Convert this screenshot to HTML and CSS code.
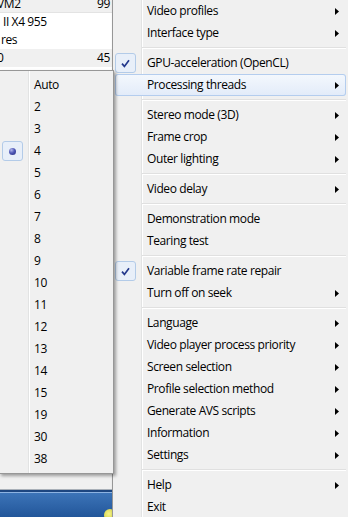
FILE: index.html
```html
<!DOCTYPE html>
<html>
<head>
<meta charset="utf-8">
<link rel="stylesheet" href="styles.css">
</head>
<body>
<div class="screen">
  <div class="listview">
    <div class="lv-row lv-head"><span class="cut3">VM2</span><span>99</span></div>
    <div class="lv-row"><span class="ind">II X4 955</span></div>
    <div class="lv-row"><span class="ind1">res</span></div>
    <div class="lv-row lv-sel"><span class="cut3">0</span><span>45</span></div>
  </div>
  <div class="window-body"></div>
  <div class="taskbar"><span class="tray-icon"></span></div>

  <div class="menu main-menu">
    <div class="mi"><span class="ic"></span><span class="lbl">Video profiles</span><svg class="arr" viewBox="0 0 4 7"><path d="M0 0L4 3.5L0 7z"/></svg></div>
    <div class="mi"><span class="ic"></span><span class="lbl">Interface type</span><svg class="arr" viewBox="0 0 4 7"><path d="M0 0L4 3.5L0 7z"/></svg></div>
    <div class="sep"></div>
    <div class="mi"><span class="ic box"><svg class="check" viewBox="0 0 9 9"><path d="M1 4.6L3.4 7.4L8 1.2"/></svg></span><span class="lbl">GPU-acceleration (OpenCL)</span></div>
    <div class="mi hot"><span class="ic"></span><span class="lbl">Processing threads</span><svg class="arr" viewBox="0 0 4 7"><path d="M0 0L4 3.5L0 7z"/></svg></div>
    <div class="sep"></div>
    <div class="mi"><span class="ic"></span><span class="lbl">Stereo mode (3D)</span><svg class="arr" viewBox="0 0 4 7"><path d="M0 0L4 3.5L0 7z"/></svg></div>
    <div class="mi"><span class="ic"></span><span class="lbl">Frame crop</span><svg class="arr" viewBox="0 0 4 7"><path d="M0 0L4 3.5L0 7z"/></svg></div>
    <div class="mi"><span class="ic"></span><span class="lbl">Outer lighting</span><svg class="arr" viewBox="0 0 4 7"><path d="M0 0L4 3.5L0 7z"/></svg></div>
    <div class="sep"></div>
    <div class="mi"><span class="ic"></span><span class="lbl">Video delay</span><svg class="arr" viewBox="0 0 4 7"><path d="M0 0L4 3.5L0 7z"/></svg></div>
    <div class="sep"></div>
    <div class="mi"><span class="ic"></span><span class="lbl">Demonstration mode</span></div>
    <div class="mi"><span class="ic"></span><span class="lbl">Tearing test</span></div>
    <div class="sep"></div>
    <div class="mi"><span class="ic box"><svg class="check" viewBox="0 0 9 9"><path d="M1 4.6L3.4 7.4L8 1.2"/></svg></span><span class="lbl">Variable frame rate repair</span></div>
    <div class="mi"><span class="ic"></span><span class="lbl">Turn off on seek</span><svg class="arr" viewBox="0 0 4 7"><path d="M0 0L4 3.5L0 7z"/></svg></div>
    <div class="sep"></div>
    <div class="mi"><span class="ic"></span><span class="lbl">Language</span><svg class="arr" viewBox="0 0 4 7"><path d="M0 0L4 3.5L0 7z"/></svg></div>
    <div class="mi"><span class="ic"></span><span class="lbl">Video player process priority</span><svg class="arr" viewBox="0 0 4 7"><path d="M0 0L4 3.5L0 7z"/></svg></div>
    <div class="mi"><span class="ic"></span><span class="lbl">Screen selection</span><svg class="arr" viewBox="0 0 4 7"><path d="M0 0L4 3.5L0 7z"/></svg></div>
    <div class="mi"><span class="ic"></span><span class="lbl">Profile selection method</span><svg class="arr" viewBox="0 0 4 7"><path d="M0 0L4 3.5L0 7z"/></svg></div>
    <div class="mi"><span class="ic"></span><span class="lbl">Generate AVS scripts</span><svg class="arr" viewBox="0 0 4 7"><path d="M0 0L4 3.5L0 7z"/></svg></div>
    <div class="mi"><span class="ic"></span><span class="lbl">Information</span><svg class="arr" viewBox="0 0 4 7"><path d="M0 0L4 3.5L0 7z"/></svg></div>
    <div class="mi"><span class="ic"></span><span class="lbl">Settings</span><svg class="arr" viewBox="0 0 4 7"><path d="M0 0L4 3.5L0 7z"/></svg></div>
    <div class="sep"></div>
    <div class="mi"><span class="ic"></span><span class="lbl">Help</span><svg class="arr" viewBox="0 0 4 7"><path d="M0 0L4 3.5L0 7z"/></svg></div>
    <div class="mi"><span class="ic"></span><span class="lbl">Exit</span></div>
  </div>

  <div class="menu sub-menu">
    <div class="mi"><span class="ic"></span><span class="lbl">Auto</span></div>
    <div class="mi"><span class="ic"></span><span class="lbl">2</span></div>
    <div class="mi"><span class="ic"></span><span class="lbl">3</span></div>
    <div class="mi"><span class="ic box"><span class="dot"></span></span><span class="lbl">4</span></div>
    <div class="mi"><span class="ic"></span><span class="lbl">5</span></div>
    <div class="mi"><span class="ic"></span><span class="lbl">6</span></div>
    <div class="mi"><span class="ic"></span><span class="lbl">7</span></div>
    <div class="mi"><span class="ic"></span><span class="lbl">8</span></div>
    <div class="mi"><span class="ic"></span><span class="lbl">9</span></div>
    <div class="mi"><span class="ic"></span><span class="lbl">10</span></div>
    <div class="mi"><span class="ic"></span><span class="lbl">11</span></div>
    <div class="mi"><span class="ic"></span><span class="lbl">12</span></div>
    <div class="mi"><span class="ic"></span><span class="lbl">13</span></div>
    <div class="mi"><span class="ic"></span><span class="lbl">14</span></div>
    <div class="mi"><span class="ic"></span><span class="lbl">15</span></div>
    <div class="mi"><span class="ic"></span><span class="lbl">19</span></div>
    <div class="mi"><span class="ic"></span><span class="lbl">30</span></div>
    <div class="mi"><span class="ic"></span><span class="lbl">38</span></div>
  </div>
</div>
</body>
</html>
```

FILE: styles.css
```css
html, body {
  margin: 0;
  padding: 0;
}

body {
  width: 348px;
  height: 517px;
  overflow: hidden;
  font-family: "Open Sans", "Noto Sans", sans-serif;
  font-size: 12px;
  letter-spacing: -0.4px;
  color: #000;
  background: #f0f0f0;
}

.screen {
  position: relative;
  width: 348px;
  height: 517px;
  overflow: hidden;
  display: flex;
  flex-direction: column;
}

/* background list view */
.listview {
  flex: none;
  width: 112px;
  margin-top: -5px;
  padding-bottom: 3px;
  background: #fff;
}

.lv-row {
  height: 18px;
  line-height: 18px;
  display: flex;
  align-items: center;
  justify-content: space-between;
  padding-right: 2px;
  white-space: nowrap;
  overflow: hidden;
}

.lv-head {
  background: #f0f0f0;
  box-sizing: border-box;
  border-bottom: 1px solid #e3e3e3;
}

.lv-sel {
  background: #f0f0f0;
}

.cut3 { margin-left: -3px; }
.ind { margin-left: 3px; }
.ind1 { margin-left: 1px; }

.window-body {
  flex: 1;
  background: #f0f0f0;
  border-bottom: 1px solid #a9b0b8;
}

.taskbar {
  flex: none;
  position: relative;
  height: 27px;
  background: linear-gradient(to bottom, #1d4680 0, #1d4680 2px, #8db3e2 2px, #8db3e2 3px, #3c74b8 3px, #22569a 100%);
}

.tray-icon {
  position: absolute;
  left: 104px;
  top: 19px;
  width: 12px;
  height: 12px;
  border-radius: 50%;
  background: radial-gradient(circle at 40% 40%, #f6f488, #bfbf2a);
}

/* menus */
.menu {
  position: absolute;
  box-sizing: border-box;
  border: 1px solid #979797;
  padding: 3px 2px;
  background:
    linear-gradient(to right, transparent 28px, #e2e3e3 28px, #e2e3e3 29px, #ffffff 29px, #ffffff 30px, transparent 30px),
    #f0f0f0;
}

.main-menu {
  left: 112px;
  top: -4px;
  width: 237px;
  box-shadow: 2px 2px 3px rgba(0, 0, 0, 0.3);
}

.sub-menu {
  left: -1px;
  top: 70px;
  width: 115px;
  box-shadow: 2px 2px 3px rgba(0, 0, 0, 0.35);
}

.mi {
  display: flex;
  align-items: center;
  height: 22px;
  white-space: nowrap;
}

.hot {
  border-radius: 3px;
  box-shadow: inset 0 0 0 1px #b4cdee;
  background: linear-gradient(to bottom, #f4f8fd, #e2ebf9);
}

.ic {
  flex: none;
  width: 21px;
  height: 20px;
  margin-right: 11px;
  box-sizing: border-box;
  display: flex;
  align-items: center;
  justify-content: center;
}

.box {
  border: 1px solid #b3cbe8;
  border-radius: 3px;
  background: #e8eff9;
}

.check {
  width: 9px;
  height: 9px;
  margin-top: 1px;
}

.check path {
  fill: none;
  stroke: #23388c;
  stroke-width: 1.7;
}

.dot {
  width: 7px;
  height: 7px;
  border-radius: 50%;
  background: radial-gradient(circle at 35% 30%, #b3b8ec 0, #5058b6 45%, #272d80 100%);
}

.lbl {
  flex: 1;
  line-height: 22px;
}

.arr {
  flex: none;
  width: 4px;
  height: 7px;
  margin-right: 7px;
  fill: #000;
}

.sep {
  height: 8px;
  margin-left: 27px;
  background: linear-gradient(to bottom, transparent 3px, #e0e0e0 3px, #e0e0e0 4px, #ffffff 4px, #ffffff 5px, transparent 5px);
}
```
